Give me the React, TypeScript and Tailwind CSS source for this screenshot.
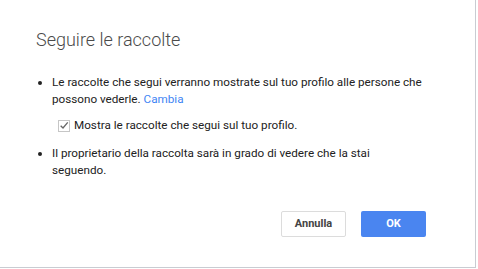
export default function App() {
  return (
    <div className="h-[269px] w-[478px] bg-white font-['Roboto','Liberation_Sans',sans-serif]">
      <div className="flex h-[268px] w-[476px] flex-col border-r border-b border-[#c9ccd2] bg-white pt-[28px] pr-[49px] pl-[36px]">
        <h2 className="text-[18px] leading-6 font-light text-[#4a4a4a]">
          Seguire le raccolte
        </h2>
        <ul className="mt-[22px] list-disc pl-[16px] text-[11.7px] leading-[17px] text-[#222] marker:text-[#222]">
          <li>
            Le raccolte che segui verranno mostrate sul tuo profilo alle
            persone che possono vederle.{" "}
            <a className="text-[#4285f4]" href="#">
              Cambia
            </a>
          </li>
        </ul>
        <label className="mt-[9px] ml-[22px] flex items-center gap-[4px] text-[11.7px] leading-[17px] text-[#222]">
          <span className="flex h-[12px] w-[12px] items-center justify-center border border-[#c6c6c6] bg-white">
            <svg className="h-[11px] w-[11px]" viewBox="0 0 12 12" fill="none">
              <path
                d="M2 6.2 L4.8 9 L10.5 2.2"
                stroke="#666"
                strokeWidth="1.6"
              />
            </svg>
          </span>
          Mostra le raccolte che segui sul tuo profilo.
        </label>
        <ul className="mt-[11px] list-disc pl-[16px] text-[11.7px] leading-[17px] text-[#222]">
          <li>
            Il proprietario della raccolta sarà in grado di vedere che la stai
            seguendo.
          </li>
        </ul>
        <div className="mt-auto mb-[30px] flex justify-end gap-[15px]">
          <button className="h-[26px] w-[65px] rounded-[2px] border border-[#dcdcdc] bg-white text-[11px] font-bold text-[#444]">
            Annulla
          </button>
          <button className="h-[26px] w-[65px] rounded-[2px] bg-[#4a85f0] text-[11px] font-bold text-white">
            OK
          </button>
        </div>
      </div>
    </div>
  );
}
